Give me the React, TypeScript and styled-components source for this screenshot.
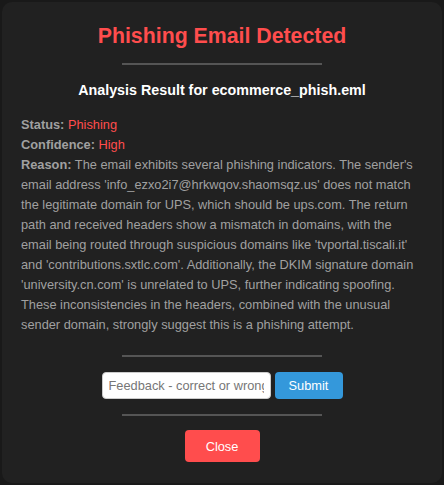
import React from "react";
import styled, { createGlobalStyle } from "styled-components";

const Global = createGlobalStyle`
  html, body { margin: 0; padding: 0; background: #191919; }
  body { font-family: "Liberation Sans", Arial, sans-serif; }
  * { box-sizing: border-box; }
`;

const Panel = styled.div`
  margin: 2px;
  height: 481px;
  background: #212121;
  border-radius: 10px;
  padding: 22px 19px 20px 19px;
  text-align: center;
  color: #a0a0a0;
`;

const Title = styled.h2`
  margin: 0;
  font-size: 21.3px;
  line-height: 24px;
  font-weight: bold;
  color: #ff4d4d;
`;

const Rule = styled.hr<{ $top: number; $bottom: number }>`
  width: 200px;
  height: 2px;
  border: none;
  background: #555;
  margin: ${(p) => p.$top}px auto ${(p) => p.$bottom}px;
`;

const Subtitle = styled.h3`
  margin: 0;
  font-size: 14.3px;
  line-height: 16px;
  font-weight: bold;
  color: #fff;
`;

const Details = styled.div`
  margin-top: 17px;
  text-align: left;
  font-size: 12.8px;
  line-height: 20px;
`;

const Line = styled.div``;

const Label = styled.strong`
  font-weight: bold;
`;

const Value = styled.span`
  color: #ff4d4d;
`;

const FeedbackRow = styled.div`
  display: flex;
  justify-content: center;
  gap: 4px;
`;

const Input = styled.input`
  width: 169px;
  height: 27px;
  padding: 1px 6px;
  border: 1px solid #ccc;
  border-radius: 4px;
  background: #fff;
  font-family: "Liberation Sans", Arial, sans-serif;
  font-size: 12.8px;
  color: #333;
  outline: none;
  &::placeholder { color: #767676; }
`;

const Button = styled.button<{ $bg: string; $w: number; $h: number }>`
  width: ${(p) => p.$w}px;
  height: ${(p) => p.$h}px;
  border: none;
  border-radius: 4px;
  background: ${(p) => p.$bg};
  color: #fff;
  font-family: "Liberation Sans", Arial, sans-serif;
  font-size: 12.8px;
  cursor: pointer;
  padding: 0;
`;

export default function App() {
  return (
    <>
      <Global />
      <Panel>
        <Title>Phishing Email Detected</Title>
        <Rule $top={15} $bottom={17} />
        <Subtitle>Analysis Result for ecommerce_phish.eml</Subtitle>
        <Details>
          <Line>
            <Label>Status:</Label> <Value>Phishing</Value>
          </Line>
          <Line>
            <Label>Confidence:</Label> <Value>High</Value>
          </Line>
          <Line>
            <Label>Reason:</Label> The email exhibits several phishing indicators. The sender's
            email address 'info_ezxo2i7@hrkwqov.shaomsqz.us' does not match the legitimate domain
            for UPS, which should be ups.com. The return path and received headers show a mismatch
            in domains, with the email being routed through suspicious domains like
            'tvportal.tiscali.it' and 'contributions.sxtlc.com'. Additionally, the DKIM signature
            domain 'university.cn.com' is unrelated to UPS, further indicating spoofing. These
            inconsistencies in the headers, combined with the unusual sender domain, strongly
            suggest this is a phishing attempt.
          </Line>
        </Details>
        <Rule $top={20} $bottom={15} />
        <FeedbackRow>
          <Input placeholder="Feedback - correct or wrong" />
          <Button $bg="#3498db" $w={68} $h={27}>Submit</Button>
        </FeedbackRow>
        <Rule $top={15} $bottom={14} />
        <Button $bg="#ff4d4d" $w={75} $h={32}>Close</Button>
      </Panel>
    </>
  );
}
